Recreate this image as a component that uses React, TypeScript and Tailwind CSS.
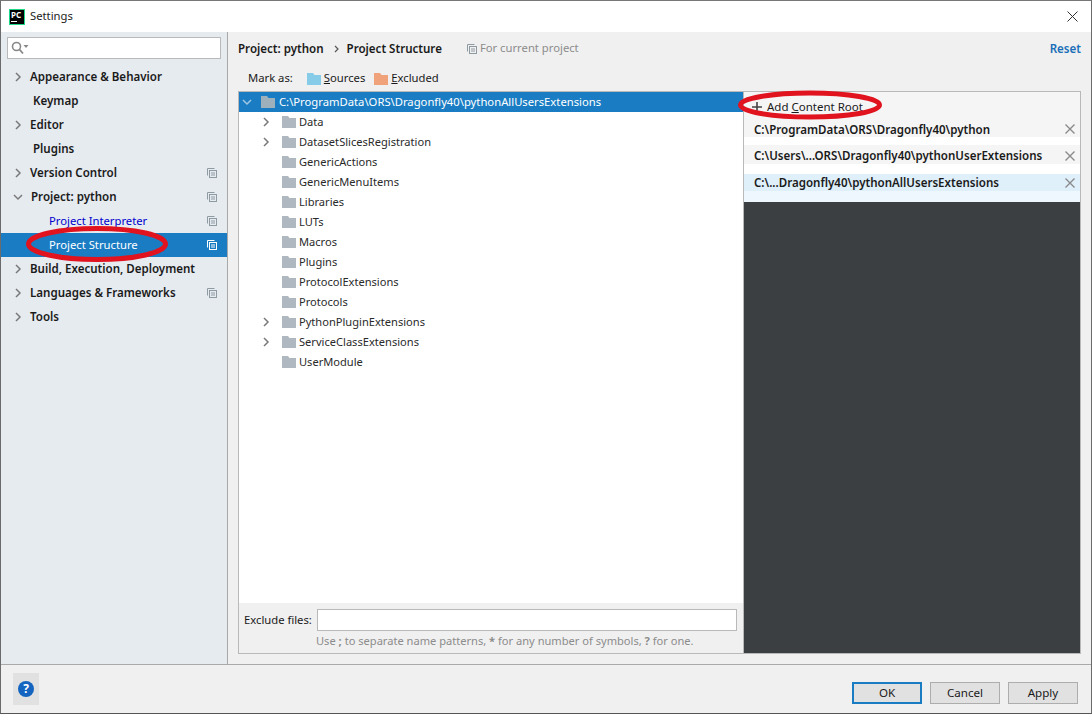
import React from "react";

const font = { fontFamily: '"Noto Sans", "Open Sans", sans-serif' };

function Chevron({ down, light }: { down?: boolean; light?: boolean }) {
  return (
    <svg width="10" height="10" viewBox="0 0 10 10" fill="none" stroke={light ? "#9fc6e4" : "#7a7a7a"} strokeWidth="1.5">
      {down ? <path d="M1 3l4 4 4-4" /> : <path d="M3 1l4 4-4 4" />}
    </svg>
  );
}

function CopyIcon({ light }: { light?: boolean }) {
  const c = light ? "#ffffff" : "#8f9ba3";
  return (
    <svg width="10" height="10" viewBox="0 0 10 10" fill="none" stroke={c} strokeWidth="1">
      <path d="M0.5 7.5V0.5H7.5" />
      <rect x="2.5" y="2.5" width="7" height="7" />
      <path d="M4 5h4M4 7h4" />
    </svg>
  );
}

function Folder({ color = "#afb8c0" }: { color?: string }) {
  return (
    <svg width="14" height="12" viewBox="0 0 14 12" className="shrink-0">
      <path d="M0 0h6l1.5 2H14v10H0z" fill={color} />
    </svg>
  );
}

type Nav = { label: string; arrow?: "r" | "d"; bold?: boolean; copy?: boolean; indent: string; cls?: string; sel?: boolean };
const nav: Nav[] = [
  { label: "Appearance & Behavior", arrow: "r", bold: true, indent: "pl-[29px]" },
  { label: "Keymap", bold: true, indent: "pl-[32px]" },
  { label: "Editor", arrow: "r", bold: true, indent: "pl-[29px]" },
  { label: "Plugins", bold: true, indent: "pl-[32px]" },
  { label: "Version Control", arrow: "r", bold: true, copy: true, indent: "pl-[29px]" },
  { label: "Project: python", arrow: "d", bold: true, copy: true, indent: "pl-[30px]" },
  { label: "Project Interpreter", copy: true, indent: "pl-[48px]", cls: "text-[#0000cc]" },
  { label: "Project Structure", copy: true, indent: "pl-[48px]", sel: true },
  { label: "Build, Execution, Deployment", arrow: "r", bold: true, indent: "pl-[29px]" },
  { label: "Languages & Frameworks", arrow: "r", bold: true, copy: true, indent: "pl-[29px]" },
  { label: "Tools", arrow: "r", bold: true, indent: "pl-[29px]" },
];

const folders: [string, boolean][] = [
  ["Data", true],
  ["DatasetSlicesRegistration", true],
  ["GenericActions", false],
  ["GenericMenuItems", false],
  ["Libraries", false],
  ["LUTs", false],
  ["Macros", false],
  ["Plugins", false],
  ["ProtocolExtensions", false],
  ["Protocols", false],
  ["PythonPluginExtensions", true],
  ["ServiceClassExtensions", true],
  ["UserModule", false],
];

function Root({ label, rowCls, barCls, hCls }: { label: string; rowCls: string; barCls: string; hCls: string }) {
  return (
    <div className={`relative ${rowCls}`}>
      <div className={`flex items-center pl-[10px] text-[11.55px] font-semibold text-[#1a1a1a] ${barCls}`}>{label}</div>
      <svg width="10" height="10" viewBox="0 0 10 10" stroke="#8a8a8a" strokeWidth="1.4" className={`absolute right-[5px] ${hCls}`}>
        <path d="M0.5 0.5l9 9M9.5 0.5l-9 9" />
      </svg>
    </div>
  );
}

function Btn({ children, primary }: { children: React.ReactNode; primary?: boolean }) {
  return (
    <button
      className={`w-[70px] h-[22px] flex items-center justify-center bg-[#e1e1e1] text-[11.6px] text-[#1a1a1a] ${
        primary ? "border-2 border-[#1a7dc4]" : "border border-[#adadad]"
      }`}
    >
      {children}
    </button>
  );
}

export default function App() {
  return (
    <div style={font} className="w-[1092px] h-[714px] flex flex-col bg-[#f0f0f0] border-x border-b border-t border-x-[#6b6b6b] border-b-[#555555] border-t-[#777777] overflow-hidden relative text-[11.25px] text-[#1a1a1a]">
      {/* title bar */}
      <div className="h-[31px] bg-white flex items-center shrink-0 pl-[8px] pr-[13px]">
        <div className="w-[16px] h-[16px] bg-black border border-[#21d789] flex flex-col items-start pl-[1px] pt-[1px]">
          <span className="text-[8px] leading-[8px] font-bold text-white">PC</span>
          <span className="w-[6px] h-[1px] bg-white mt-[2px]" />
        </div>
        <span className="ml-[5px] text-[#222]">Settings</span>
        <svg width="11" height="11" viewBox="0 0 11 11" stroke="#333" strokeWidth="1" className="ml-auto">
          <path d="M0.5 0.5l10 10M10.5 0.5l-10 10" />
        </svg>
      </div>

      <div className="flex-1 flex min-h-0">
        {/* sidebar */}
        <div className="w-[227px] bg-[#e6ebf0] border-r border-[#a9a9a9] shrink-0 flex flex-col">
          <div className="mx-[6px] mt-[5px] h-[22px] bg-white border border-[#b9b9b9] flex items-center pl-[3px] shrink-0">
            <svg width="18" height="14" viewBox="0 0 18 14" fill="none">
              <circle cx="5.5" cy="5.5" r="4" stroke="#888" strokeWidth="1.6" />
              <path d="M8.5 8.5l3.5 4" stroke="#888" strokeWidth="1.8" />
              <path d="M12.5 4h5l-2.5 3z" fill="#888" />
            </svg>
          </div>
          <div className="mt-[6px] flex flex-col">
            {nav.map((n) => (
              <div
                key={n.label}
                className={`relative h-[24px] flex items-center ${n.indent} pr-[10px] ${n.sel ? "bg-[#1a7dc4] text-white" : n.cls ?? "text-[#1a1a1a]"} ${n.bold ? "font-semibold text-[11.55px]" : ""}`}
              >
                {n.arrow && (
                  <span className="absolute left-[12px] top-[7px]">
                    <Chevron down={n.arrow === "d"} />
                  </span>
                )}
                <span className="whitespace-nowrap">{n.label}</span>
                {n.copy && (
                  <span className="ml-auto flex">
                    <CopyIcon light={n.sel} />
                  </span>
                )}
              </div>
            ))}
          </div>
        </div>

        {/* content */}
        <div className="flex-1 flex flex-col px-[10px] min-w-0">
          <div className="h-[35px] shrink-0 flex items-center mt-[-1px]">
            <span className="font-semibold text-[11.55px]">Project: python</span>
            <svg width="8" height="8" viewBox="0 0 8 8" fill="none" stroke="#555" strokeWidth="1.2" className="ml-[9px]">
              <path d="M2 1l3 3-3 3" />
            </svg>
            <span className="font-semibold text-[11.55px] ml-[6px]">Project Structure</span>
            <span className="ml-[25px] flex">
              <CopyIcon />
            </span>
            <span className="ml-[3px] text-[#8c8c8c]">For current project</span>
            <span className="ml-auto font-semibold text-[11.55px] text-[#1a6fb8]">Reset</span>
          </div>
          <div className="h-[27px] shrink-0 flex items-center pl-[10px] mt-[-1px] mb-[-1px]">
            <span>Mark as:</span>
            <span className="ml-[14px] flex items-center gap-[3px]">
              <Folder color="#86cbe8" />
              <span>
                <u>S</u>ources
              </span>
            </span>
            <span className="ml-[9px] flex items-center gap-[3px]">
              <Folder color="#f0a27a" />
              <span>
                <u>E</u>xcluded
              </span>
            </span>
          </div>

          <div className="h-[563px] shrink-0 border border-[#b9b9b9] flex relative">
            <div className="w-[505px] shrink-0 flex flex-col border-r border-[#b9b9b9] bg-white">
              <div className="flex-1 min-h-0">
                <div className="h-[20px] bg-[#1a7dc4] text-white flex items-center relative pl-[22px]">
                  <span className="absolute left-[3px] top-[5px]">
                    <Chevron down light />
                  </span>
                  <Folder color="#9fb0bd" />
                  <span className="ml-[4px]">C:\ProgramData\ORS\Dragonfly40\pythonAllUsersExtensions</span>
                </div>
                {folders.map(([name, exp]) => (
                  <div key={name} className="h-[20px] flex items-center relative pl-[43px] text-[#2a2a2a] text-[11.1px]">
                    {exp && (
                      <span className="absolute left-[22px] top-[5px]">
                        <Chevron />
                      </span>
                    )}
                    <Folder />
                    <span className="ml-[3px]">{name}</span>
                  </div>
                ))}
              </div>
              <div className="h-[50px] bg-[#f0f0f0] shrink-0 pl-[5px] pr-[6px] pt-[6px]">
                <div className="flex items-center">
                  <span className="w-[73px] shrink-0 mt-[1px]">Exclude files:</span>
                  <div className="flex-1 h-[22px] bg-white border border-[#b9b9b9]" />
                </div>
                <div className="pl-[72px] text-[11.1px] leading-[20px] text-[#8c8c8c] whitespace-nowrap">
                  Use <b>;</b> to separate name patterns, <b>*</b> for any number of symbols, <b>?</b> for one.
                </div>
              </div>
            </div>

            <div className="flex-1 flex flex-col bg-[#3c3f41] min-w-0">
              <div className="bg-white h-[110px] shrink-0 flex flex-col">
                <div className="h-[29px] flex items-center bg-[#f5f5f5] pl-[8px] shrink-0">
                  <svg width="10" height="10" viewBox="0 0 10 10" stroke="#444" strokeWidth="1.6">
                    <path d="M5 0v10M0 5h10" />
                  </svg>
                  <span className="ml-[5px] text-[11.5px]">
                    Add <u>C</u>ontent Root
                  </span>
                </div>
                <Root label="C:\ProgramData\ORS\Dragonfly40\python" rowCls="h-[24px] shrink-0" barCls="h-[16px] pt-[1px] bg-[#f5f5f5]" hCls="top-[3px]" />
                <Root label="C:\Users\...ORS\Dragonfly40\pythonUserExtensions" rowCls="h-[29px] shrink-0" barCls="h-[19px] pt-[3px] bg-[#f5f5f5]" hCls="top-[6px]" />
                <Root label="C:\...Dragonfly40\pythonAllUsersExtensions" rowCls="flex-1 bg-[#eef7fd]" barCls="h-[17px] pt-[1px] bg-[#dff0fb]" hCls="top-[4px]" />
              </div>
            </div>
          </div>
        </div>
      </div>

      {/* footer */}
      <div className="h-[49px] shrink-0 border-t border-[#a9a9a9] bg-[#f0f0f0] flex items-center pr-[13px]">
        <div className="ml-[12px] w-[26px] h-[32px] bg-[#e1e1e1] flex items-center justify-center">
          <div className="w-[16px] h-[16px] rounded-full bg-[#1565c0] text-white text-[12px] font-bold flex items-center justify-center">?</div>
        </div>
        <div className="ml-auto flex gap-[8px] mt-[7px]">
          <Btn primary>OK</Btn>
          <Btn>Cancel</Btn>
          <Btn>Apply</Btn>
        </div>
      </div>

      {/* red annotations */}
      <svg className="absolute left-[-1px] top-[-1px] pointer-events-none" width="1092" height="714" fill="none" stroke="#e0131f" strokeWidth="5">
        <ellipse cx="97" cy="244" rx="68.5" ry="15.5" />
        <ellipse cx="810" cy="105" rx="69.5" ry="12" />
      </svg>
    </div>
  );
}
